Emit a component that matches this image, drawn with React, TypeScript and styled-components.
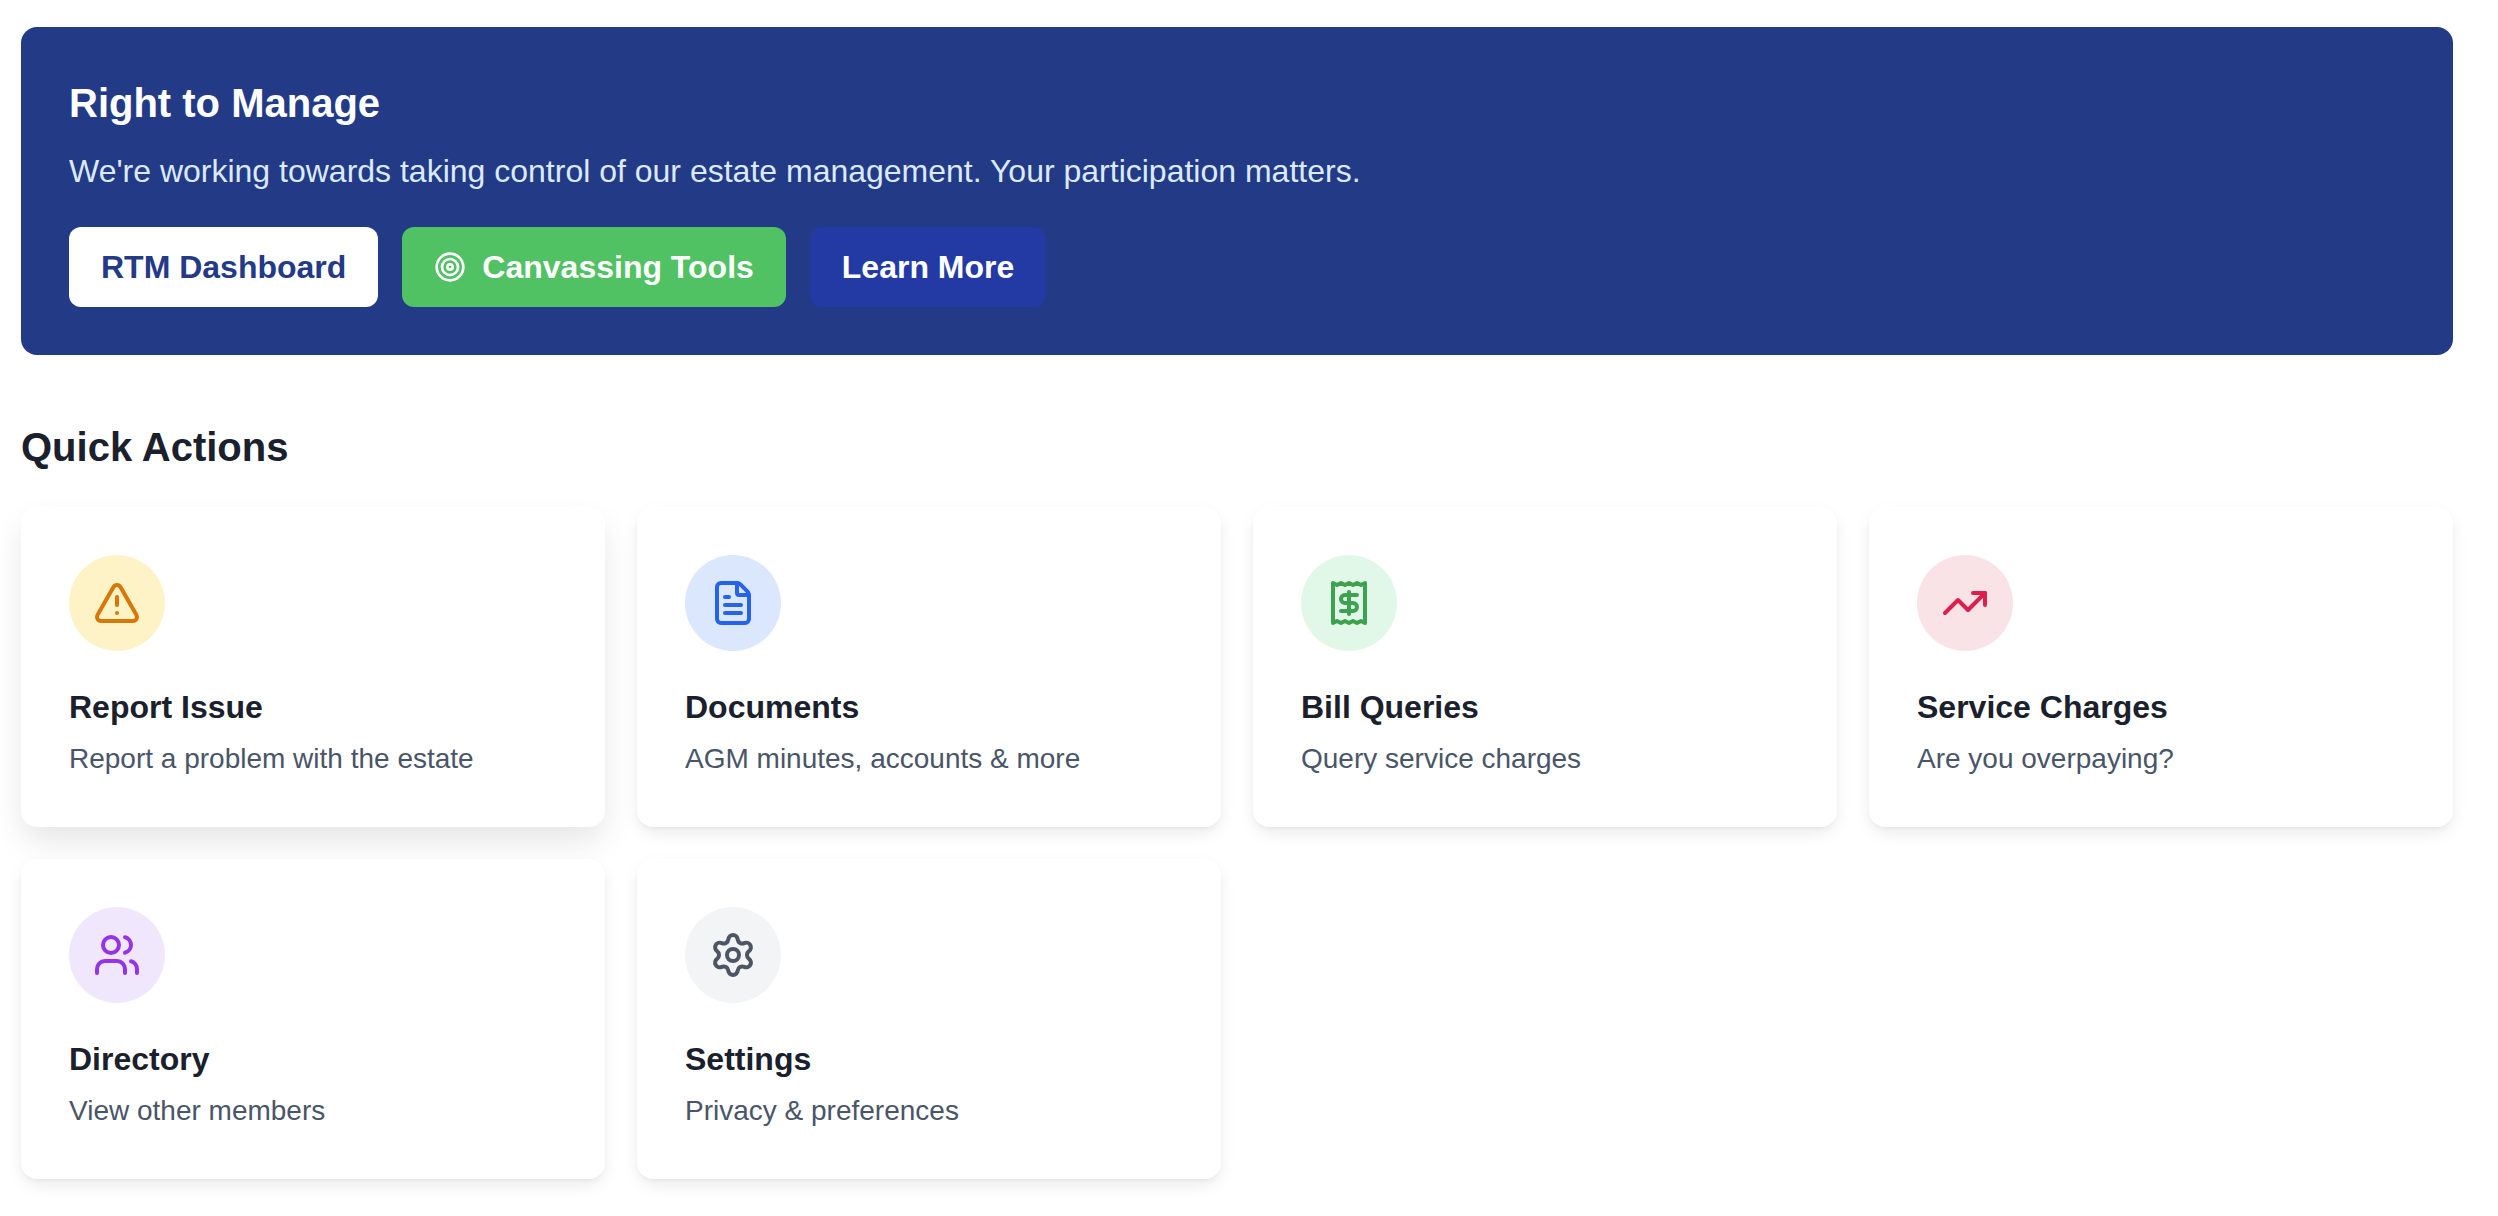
import React from "react";
import styled, { createGlobalStyle } from "styled-components";
import {
  TriangleAlert,
  FileText,
  Receipt,
  TrendingUp,
  Users,
  Settings,
  Target,
  LucideIcon,
} from "lucide-react";

const GlobalStyle = createGlobalStyle`
  * {
    box-sizing: border-box;
  }

  body {
    margin: 0;
    background: #ffffff;
    font-family: "Liberation Sans", Arial, sans-serif;
  }
`;

const Page = styled.main`
  width: 2474px;
  padding: 27px 21px 40px;
`;

const Banner = styled.section`
  background: #233a87;
  border-radius: 16px;
  padding: 48px;
  color: #ffffff;
`;

const BannerTitle = styled.h2`
  margin: 0 0 16px;
  font-size: 40px;
  line-height: 56px;
  font-weight: 700;
`;

const BannerText = styled.p`
  margin: 0 0 32px;
  font-size: 32px;
  line-height: 48px;
  color: #dbeafe;
`;

const ButtonRow = styled.div`
  display: flex;
  gap: 24px;
`;

const Button = styled.a<{ $bg: string; $fg: string }>`
  display: inline-flex;
  align-items: center;
  gap: 16px;
  height: 80px;
  padding: 0 32px;
  border-radius: 12px;
  background: ${(p) => p.$bg};
  color: ${(p) => p.$fg};
  font-size: 32px;
  font-weight: 700;
`;

const SectionTitle = styled.h2`
  margin: 64px 0 32px;
  font-size: 40px;
  line-height: 56px;
  font-weight: 700;
  color: #1a202c;
`;

const CardGrid = styled.div`
  display: grid;
  grid-template-columns: repeat(4, 1fr);
  gap: 32px;
`;

const Card = styled.div<{ $raised?: boolean }>`
  height: 320px;
  padding: 48px;
  background: #ffffff;
  border-radius: 16px;
  box-shadow: ${(p) =>
    p.$raised
      ? "0 16px 32px -2px rgba(0, 0, 0, 0.1)"
      : "0 7px 18px -3px rgba(0, 0, 0, 0.1), 0 2px 4px -1px rgba(0, 0, 0, 0.05)"};
`;

const IconCircle = styled.div<{ $bg: string; $fg: string }>`
  display: flex;
  align-items: center;
  justify-content: center;
  width: 96px;
  height: 96px;
  margin-bottom: 32px;
  border-radius: 50%;
  background: ${(p) => p.$bg};
  color: ${(p) => p.$fg};
`;

const CardTitle = styled.h3`
  margin: 0 0 7px;
  font-size: 32px;
  line-height: 48px;
  font-weight: 700;
  color: #1a202c;
`;

const CardText = styled.p`
  margin: 0;
  font-size: 28px;
  line-height: 42px;
  color: #4a5568;
`;

type Action = {
  title: string;
  text: string;
  icon: LucideIcon;
  bg: string;
  fg: string;
};

const actions: Action[] = [
  { title: "Report Issue", text: "Report a problem with the estate", icon: TriangleAlert, bg: "#fef3c7", fg: "#d97706" },
  { title: "Documents", text: "AGM minutes, accounts & more", icon: FileText, bg: "#dbe7fd", fg: "#2563eb" },
  { title: "Bill Queries", text: "Query service charges", icon: Receipt, bg: "#e1f8e8", fg: "#3da24f" },
  { title: "Service Charges", text: "Are you overpaying?", icon: TrendingUp, bg: "#fae3e6", fg: "#dc1f4d" },
  { title: "Directory", text: "View other members", icon: Users, bg: "#f0e7fd", fg: "#9333ea" },
  { title: "Settings", text: "Privacy & preferences", icon: Settings, bg: "#f3f4f6", fg: "#4b5563" },
];

export default function App() {
  return (
    <Page>
      <GlobalStyle />
      <Banner>
        <BannerTitle>Right to Manage</BannerTitle>
        <BannerText>We're working towards taking control of our estate management. Your participation matters.</BannerText>
        <ButtonRow>
          <Button $bg="#ffffff" $fg="#233a87">RTM Dashboard</Button>
          <Button $bg="#51c264" $fg="#ffffff">
            <Target size={32} />
            Canvassing Tools
          </Button>
          <Button $bg="#233aa5" $fg="#ffffff">Learn More</Button>
        </ButtonRow>
      </Banner>
      <SectionTitle>Quick Actions</SectionTitle>
      <CardGrid>
        {actions.map((a, i) => (
          <Card key={a.title} $raised={i === 0}>
            <IconCircle $bg={a.bg} $fg={a.fg}>
              <a.icon size={48} />
            </IconCircle>
            <CardTitle>{a.title}</CardTitle>
            <CardText>{a.text}</CardText>
          </Card>
        ))}
      </CardGrid>
    </Page>
  );
}
